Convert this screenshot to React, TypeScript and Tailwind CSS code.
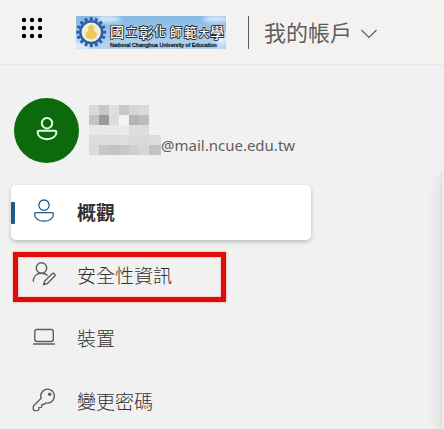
import type { ReactNode } from 'react';

interface NavItem {
    id: string;
    label: string;
    icon: ReactNode;
    active?: boolean;
    highlighted?: boolean;
}

const PersonIcon = ({ className, strokeWidth = 1.3 }: { className?: string; strokeWidth?: number }) => (
    <svg viewBox="0 0 24 24" fill="none" stroke="currentColor" strokeWidth={strokeWidth} className={className} aria-hidden="true">
        <circle cx="12" cy="6.2" r="5.2" />
        <path d="M4.2 13.7h15.6c1 0 1.6.6 1.6 1.5 0 4.1-4 7-9.4 7s-9.4-2.9-9.4-7c0-.9.6-1.5 1.6-1.5z" />
    </svg>
);

const PersonEditIcon = () => (
    <svg viewBox="0 0 24 24" fill="none" stroke="currentColor" strokeWidth="1.4" strokeLinecap="round" strokeLinejoin="round" className="w-6 h-6" aria-hidden="true">
        <circle cx="9.5" cy="6" r="5.2" />
        <path d="M1.2 19.1c.3-4.7 3.6-7.9 8.3-7.9 2.4 0 4.3.8 5.6 2" />
        <path d="M19.9 12c.8-.8 1.8-.8 2.6-.1.7.8.7 1.8-.1 2.6l-7 7-3.9 1.2 1.3-3.8 7.1-6.9z" />
    </svg>
);

const LaptopIcon = () => (
    <svg viewBox="0 0 24 24" fill="none" stroke="currentColor" strokeWidth="1.4" strokeLinecap="round" className="w-6 h-6" aria-hidden="true">
        <rect x="2.8" y="4.5" width="18.5" height="12" rx="2" />
        <path d="M1.5 19h21" />
    </svg>
);

const KeyIcon = () => (
    <svg viewBox="0 0 24 24" fill="none" stroke="currentColor" strokeWidth="1.4" strokeLinejoin="round" className="w-6 h-6" aria-hidden="true">
        <path d="M15.8 1.1a7 7 0 0 0-6.7 9.1l-7.2 7.3c-.4.4-.6.8-.6 1.3v2.3c0 .9.6 1.5 1.5 1.5h2.6c.8 0 1.4-.6 1.4-1.4v-1.6h1.6c.8 0 1.4-.6 1.4-1.4v-1.7h1.6c.5 0 .9-.2 1.2-.5l1.2-1.1A7 7 0 1 0 15.8 1.1z" />
        <circle cx="17.7" cy="6.2" r="1.1" fill="currentColor" />
    </svg>
);

const navItems: NavItem[] = [
    { id: 'overview', label: '概觀', icon: <PersonIcon className="w-6 h-6" />, active: true },
    { id: 'security', label: '安全性資訊', icon: <PersonEditIcon />, highlighted: true },
    { id: 'devices', label: '裝置', icon: <LaptopIcon /> },
    { id: 'password', label: '變更密碼', icon: <KeyIcon /> },
];

// Grey level of every block that hides the user name, null where there is none
const maskRows = [
    ['#d9d9d9', '#c8c8c8', '#dedede', '#c7c7c7', '#d6d6d6', '#dadada', null],
    ['#c3c3c3', '#999999', '#dcdcdc', '#f3f3f3', '#b4b4b4', '#bdbdbd', null],
    ['#e8e8e8', '#e8e8e8', '#e9e9e9', '#ebebeb', '#dddddd', '#dddddd', null],
    ['#dcdcdc', '#dddddd', '#dddcdb', '#dedede', '#dadada', '#d8d8d8', '#dcdcdc'],
    ['#dadada', '#c8c8c8', '#c3c3c3', '#c7c7c7', '#cfcfcf', '#d6d6d6', '#c4c4c4'],
];

const teeth = Array.from({ length: 16 }, (_, i) => i * 22.5);

// Brush lettering of uneven size, one entry per character
const logoGlyphs = [
    { char: '國', x: 34, y: 21, size: 14 },
    { char: '立', x: 50, y: 20, size: 11 },
    { char: '彰', x: 63, y: 22, size: 14 },
    { char: '化', x: 78, y: 20, size: 12 },
    { char: '師', x: 94, y: 21, size: 12 },
    { char: '範', x: 108, y: 21, size: 13 },
    { char: '大', x: 123, y: 21, size: 10 },
    { char: '學', x: 134, y: 22, size: 14 },
];

function UniversityLogo() {
    return (
        <svg viewBox="0 0 150 33" className="w-[150px] h-[33px]" role="img" aria-label="國立彰化師範大學">
            <defs>
                <linearGradient id="sky" x1="0" y1="0" x2="0" y2="1">
                    <stop offset="0" stopColor="#86b8e2" />
                    <stop offset="0.6" stopColor="#a3cbea" />
                    <stop offset="1" stopColor="#b9d6ec" />
                </linearGradient>
                <filter id="cloud">
                    <feGaussianBlur stdDeviation="2" />
                </filter>
            </defs>
            <rect width="150" height="33" fill="url(#sky)" />
            <g fill="#e3eff8" filter="url(#cloud)">
                <ellipse cx="32" cy="3" rx="13" ry="3" />
                <ellipse cx="5" cy="30" rx="9" ry="4" />
                <ellipse cx="140" cy="3" rx="13" ry="3" />
                <ellipse cx="145" cy="22" rx="6" ry="7" />
            </g>
            <g fill="#2f60a8">
                {teeth.map(angle => (
                    <rect key={angle} x="13.7" y="1.2" width="3" height="5" transform={`rotate(${angle} 15.2 16.2)`} />
                ))}
                <circle cx="15.2" cy="16.2" r="12" />
            </g>
            <circle cx="15.2" cy="16.2" r="9.6" fill="#edf3f1" />
            <circle cx="15.2" cy="16.2" r="7.8" fill="#f4ecc8" />
            <path d="M15.2 8.2l3.4 3-.8 3.2 3 2.6-.5 4.6-5.1 1.9-5.1-1.9-.5-4.6 3-2.6-.8-3.2z" fill="#efc95a" />
            <g fill="#f4f8fb" stroke="#26323c" strokeWidth="1.8" strokeLinejoin="round" paintOrder="stroke" className="font-['Noto_Sans_CJK_TC',sans-serif] font-medium">
                {logoGlyphs.map(glyph => (
                    <text key={glyph.char} x={glyph.x} y={glyph.y} fontSize={glyph.size}>
                        {glyph.char}
                    </text>
                ))}
            </g>
            <text x="34" y="31" fontSize="5.6" fill="#12202c" stroke="#4b6478" strokeWidth="0.5" paintOrder="stroke" className="font-['Liberation_Sans',sans-serif]">
                National Changhua University of Education
            </text>
        </svg>
    );
}

function Header() {
    return (
        <header className="flex items-center h-16 pl-3 bg-[#f3f2f1] border-b border-[#e6e6e6] box-content">
            <button aria-label="應用程式啟動器" className="flex items-center justify-center w-10 h-10 mb-2">
                <svg viewBox="0 0 22 22" className="w-[22px] h-[22px]" aria-hidden="true">
                    {[3, 11, 19].map(y => [3, 11, 19].map(x => <circle key={`${x}-${y}`} cx={x} cy={y} r="2.2" />))}
                </svg>
            </button>
            <a href="#home" className="ml-6">
                <UniversityLogo />
            </a>
            <div className="w-px h-[33px] ml-[22px] bg-[#605e5c]" />
            <button className="flex items-center gap-[9px] ml-[15px] text-[#605e5c]">
                <span className="text-[22px] leading-8">我的帳戶</span>
                <svg viewBox="0 0 16 10" fill="none" stroke="currentColor" strokeWidth="1.1" className="w-4 h-[10px] mt-1" aria-hidden="true">
                    <path d="M.5 1L8 8.5 15.5 1" />
                </svg>
            </button>
        </header>
    );
}

function Profile() {
    return (
        <div className="flex items-center gap-[10px] pl-[3px]">
            <div className="flex items-center justify-center w-[65px] h-[65px] pb-1 rounded-full bg-[#0b6a0b] text-[#e3ffe3]">
                <PersonIcon className="w-6 h-6" strokeWidth={2} />
            </div>
            <div className="flex items-end pb-0.5">
                <div aria-hidden="true">
                    {maskRows.map((row, y) => (
                        <div key={y} className="grid grid-cols-[repeat(6,10px)_12px]">
                            {row.map((color, x) => (
                                <span key={x} className="h-[10px]" style={{ backgroundColor: color ?? 'transparent' }} />
                            ))}
                        </div>
                    ))}
                </div>
                <span className="text-[15px] leading-5 text-[#605e5c] font-['Noto_Sans',sans-serif]">@mail.ncue.edu.tw</span>
            </div>
        </div>
    );
}

function NavLink({ item }: { item: NavItem }) {
    return (
        <li className="relative">
            <a
                href={`#${item.id}`}
                aria-current={item.active ? 'page' : undefined}
                className={`flex items-center h-[55px] rounded-[5px] ${item.active ? 'bg-white shadow-[0_2px_4px_rgba(0,0,0,0.22)]' : ''}`}
            >
                <span className={`w-1 h-[22px] rounded-[1px] ${item.active ? 'bg-[#1b5a8c]' : ''}`} />
                <span className={`ml-[17px] mb-1 ${item.active ? 'text-[#1b5a8c]' : 'text-[#605e5c]'}`}>{item.icon}</span>
                <span className={`ml-[21px] text-[19px] leading-7 text-[#323130] ${item.active ? 'font-bold' : 'font-light'}`}>{item.label}</span>
            </a>
            {item.highlighted && (
                <div className="absolute top-1 left-[2px] w-[213px] h-[50px] border-[5px] border-[#e00c0c] shadow-[0_0_2px_#ff8080,inset_0_0_2px_#ff8080] pointer-events-none" />
            )}
        </li>
    );
}

export default function App() {
    return (
        <div className="flex flex-col min-h-screen bg-[#f1f1f1] overflow-hidden font-['Open_Sans','Noto_Sans_CJK_TC',sans-serif]">
            <Header />
            <div className="flex flex-1">
                <aside className="flex-1 pl-[11px] pr-[131px] pt-[33px]">
                    <Profile />
                    <nav className="mt-[22px]">
                        <ul className="flex flex-col gap-2">
                            {navItems.map(item => (
                                <NavLink key={item.id} item={item} />
                            ))}
                        </ul>
                    </nav>
                </aside>
                <main className="w-[2px] mt-[106px] bg-[#ededed] shadow-[0_6px_14px_rgba(0,0,0,0.4),0_0_2px_rgba(0,0,0,0.15)]" />
            </div>
        </div>
    );
}
